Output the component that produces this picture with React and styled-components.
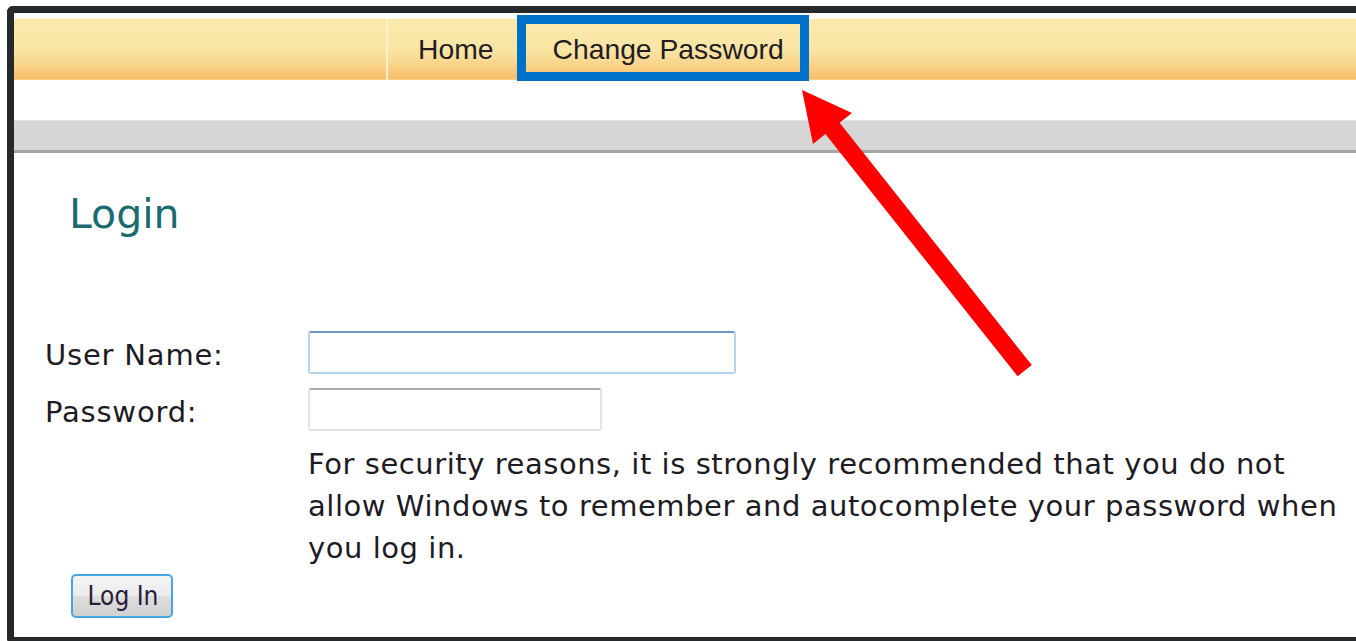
import styled, { createGlobalStyle } from "styled-components";

const GlobalStyle = createGlobalStyle`
  html, body {
    margin: 0;
    padding: 0;
    background: #ffffff;
    overflow: hidden;
  }
  body {
    font-family: "DejaVu Sans", Verdana, sans-serif;
    color: #1e1b24;
  }
`;

const Page = styled.div`
  position: relative;
  width: 1356px;
  height: 641px;
  padding: 6px 0 0 7px;
  box-sizing: border-box;
`;

const Frame = styled.div`
  width: 1370px;
  height: 638px;
  box-sizing: border-box;
  border: 7px solid #26292c;
  border-right: none;
  border-radius: 6px 0 0 6px;
  padding-top: 6px;
  background: #ffffff;
`;

const MenuBar = styled.nav`
  height: 61px;
  display: flex;
  align-items: stretch;
  padding-left: 372px;
  background: linear-gradient(
    to bottom,
    #fbe9ab 0%,
    #fae6a6 48%,
    #f9d48a 75%,
    #f8bd69 98%,
    #fbd9a2 100%
  );
`;

const MenuItem = styled.a`
  position: relative;
  display: flex;
  align-items: center;
  padding: 0 ${(p) => p.$right}px 0 ${(p) => p.$left}px;
  border-left: ${(p) => (p.$divider ? "2px solid #fdf0cf" : "none")};
  font-family: "Liberation Sans", Arial, sans-serif;
  font-size: 28.3px;
  color: #221d24;
  text-decoration: none;
  white-space: nowrap;

  ${(p) =>
    p.$marked &&
    `
    &::after {
      content: "";
      position: absolute;
      top: -4px;
      bottom: -1px;
      left: 0;
      right: 0;
      border: 9px solid #0070c9;
      pointer-events: none;
    }
  `}
`;

const Spacer = styled.div`
  height: 40px;
`;

const GreyBand = styled.div`
  height: 29px;
  background: #d6d6d6;
  border-top: 1px solid #e4e4e4;
  border-bottom: 3px solid #a4a4a4;
  box-sizing: content-box;
`;

const Content = styled.main`
  padding-left: 29px;
`;

const Heading = styled.h1`
  margin: 38px 0 0 26px;
  font-family: "DejaVu Sans", Verdana, sans-serif;
  font-weight: normal;
  font-size: 41px;
  line-height: 46px;
  color: #196b70;
`;

const Form = styled.form`
  margin-top: 94px;
  display: grid;
  grid-template-columns: 265px 1045px;
  row-gap: 14px;
  align-items: start;
`;

const Label = styled.label`
  height: 43px;
  box-sizing: border-box;
  padding: 3px 0 0 2px;
  font-size: 29px;
  line-height: 43px;
  letter-spacing: 0.8px;
  white-space: nowrap;
  color: #1e1b24;
`;

const Field = styled.input`
  width: ${(p) => p.$width}px;
  height: 43px;
  box-sizing: border-box;
  border: 2px solid ${(p) => (p.$focused ? "#b7d4ee" : "#e2e4eb")};
  border-top-color: ${(p) => (p.$focused ? "#6a98c6" : "#aaaaaa")};
  border-radius: 3px;
  background: #ffffff;
  outline: none;
  font-size: 24px;
  padding: 0 6px;
`;

const Note = styled.p`
  grid-column: 2;
  margin: -2px 0 0;
  font-size: 29px;
  line-height: 42px;
  letter-spacing: 0.55px;
  color: #1e1b24;
`;

const Submit = styled.button`
  margin: 5px 0 0 28px;
  width: 102px;
  height: 44px;
  box-sizing: border-box;
  border: 2px solid #47a6dd;
  border-radius: 5px;
  background: linear-gradient(
    to bottom,
    #f4f4f4 0%,
    #ececec 48%,
    #dedede 52%,
    #d0d0d0 100%
  );
  font-family: "DejaVu Sans Condensed", "DejaVu Sans", sans-serif;
  font-size: 26px;
  color: #2a1b3a;
  padding: 0 0 0 2px;
  cursor: pointer;
`;

const Pointer = styled.svg`
  position: absolute;
  top: 0;
  left: 0;
  pointer-events: none;
`;

export default function App() {
  return (
    <>
      <GlobalStyle />
      <Page>
        <Frame>
          <MenuBar>
            <MenuItem href="#" $divider $left={30} $right={24}>
              Home
            </MenuItem>
            <MenuItem href="#" $marked $left={35} $right={25}>
              Change Password
            </MenuItem>
          </MenuBar>
          <Spacer />
          <GreyBand />
          <Content>
            <Heading>Login</Heading>
            <Form onSubmit={(e) => e.preventDefault()}>
              <Label htmlFor="user">User Name:</Label>
              <Field id="user" type="text" $width={428} $focused />
              <Label htmlFor="pass">Password:</Label>
              <Field id="pass" type="password" $width={294} />
              <Note>
                For security reasons, it is strongly recommended that you do not
                allow Windows to remember and autocomplete your password when
                you log in.
              </Note>
            </Form>
            <Submit type="button">Log In</Submit>
          </Content>
        </Frame>
        <Pointer width="1356" height="641" viewBox="0 0 1356 641">
          <polygon
            fill="#ff0000"
            points="802,90 852,113 839.6,122.8 1031.8,365.1 1017.6,376.3 825.4,134 813,144"
          />
        </Pointer>
      </Page>
    </>
  );
}
